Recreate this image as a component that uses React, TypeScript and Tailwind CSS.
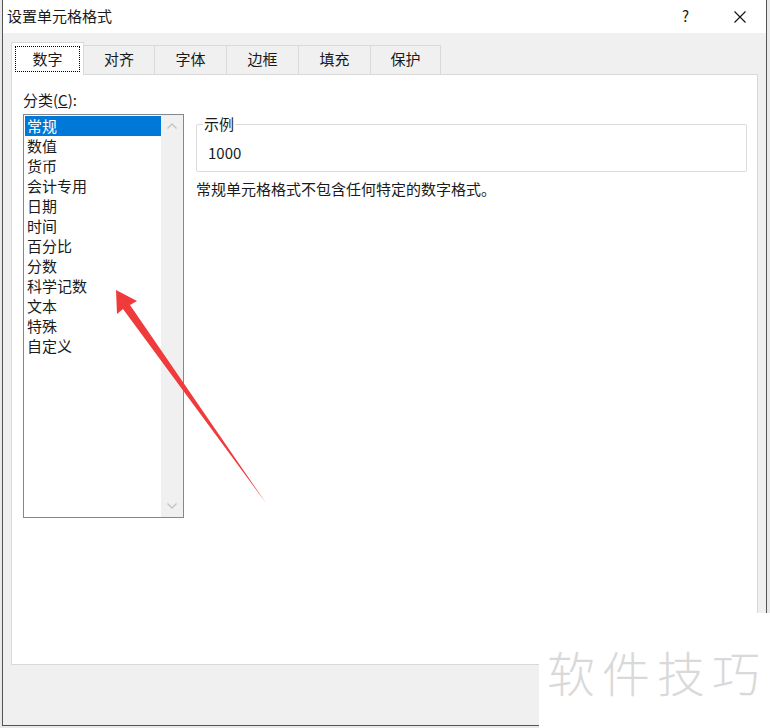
import React from "react";

const tabs = [
  { t: "对齐", w: "w-[71px]" },
  { t: "字体", w: "w-[72px]" },
  { t: "边框", w: "w-[72px]" },
  { t: "填充", w: "w-[72px]" },
  { t: "保护", w: "w-[70px]" },
];
const categories = ["常规", "数值", "货币", "会计专用", "日期", "时间", "百分比", "分数", "科学记数", "文本", "特殊", "自定义"];

export default function App() {
  return (
    <div
      className="relative w-[770px] h-[728px] overflow-hidden bg-[#e9e9e9] text-[#1a1a1a]"
      style={{ fontFamily: '"Noto Sans CJK SC", "Noto Sans", sans-serif' }}
    >
      <div className="ml-[2px] w-[765px] h-[726px] border-l border-r border-b border-[#555] bg-[#f0f0f0] flex flex-col">
        {/* title bar */}
        <div className="h-[33px] bg-white flex items-center pl-[4px] text-[15px]">
          <span>设置单元格格式</span>
          <span className="ml-auto mr-[45px] text-[15px]">?</span>
          <svg width="12" height="12" viewBox="0 0 12 12" className="mr-[20px]">
            <path d="M0.5 0.5 L11.5 11.5 M11.5 0.5 L0.5 11.5" stroke="#111" strokeWidth="1.1" />
          </svg>
        </div>

        <div className="pt-[9px] pl-[8px] pr-[8px]">
          {/* tabs */}
          <div className="flex items-end h-[32px] relative z-10">
            <div className="w-[73px] h-[33px] -mb-px bg-white border border-b-0 border-[#d9d9d9] p-[3px]">
              <div className="h-full border border-dotted border-black flex items-center justify-center text-[15px]">
                数字
              </div>
            </div>
            {tabs.map((x) => (
              <div
                key={x.t}
                className={
                  x.w +
                  " h-[29px] border-t border-r border-[#d9d9d9] bg-[#f0f0f0] flex items-center justify-center text-[15px] pb-[1px]"
                }
              >
                {x.t}
              </div>
            ))}
          </div>

          {/* panel */}
          <div className="h-[591px] bg-white border border-[#d9d9d9] flex pl-[11px] pr-[10px]">
            <div className="flex flex-col pt-[15px]">
              <div className="text-[15px] leading-[20px] h-[24px]">
                分类(<span className="underline">C</span>):
              </div>
              <div className="w-[161px] h-[404px] border border-[#828790] bg-white flex">
                <div className="flex-1 pt-px pl-px">
                  {categories.map((c, i) => (
                    <div
                      key={c}
                      className={
                        "h-[20px] leading-[20px] pl-[2px] text-[15px] " +
                        (i === 0 ? "bg-[#0078d7] text-white" : "")
                      }
                    >
                      {c}
                    </div>
                  ))}
                </div>
                <div className="w-[22px] bg-[#f0f0f0] flex flex-col items-center justify-between py-[8px]">
                  <svg width="10" height="6" viewBox="0 0 10 6">
                    <path d="M0.5 5.5 L5 1 L9.5 5.5" fill="none" stroke="#c2c2c2" strokeWidth="1.3" />
                  </svg>
                  <svg width="10" height="6" viewBox="0 0 10 6">
                    <path d="M0.5 0.5 L5 5 L9.5 0.5" fill="none" stroke="#c2c2c2" strokeWidth="1.3" />
                  </svg>
                </div>
              </div>
            </div>

            <div className="flex-1 pl-[12px] pt-[49px]">
              <div className="relative h-[48px] border border-[#dcdcdc] rounded-[2px]">
                <span className="absolute left-[6px] -top-[11px] bg-white px-px text-[15px] leading-[20px]">
                  示例
                </span>
                <div className="pl-[11px] pt-[18px] text-[15px] leading-[20px]">1000</div>
              </div>
              <div className="mt-[7px] text-[15px] leading-[20px]">常规单元格格式不包含任何特定的数字格式。</div>
            </div>
          </div>
        </div>
      </div>

      {/* watermark */}
      <div className="absolute left-[539px] top-[613px] right-0 bottom-0 bg-white flex items-center pl-[8px]">
        <span className="text-[48px] tracking-[7px] font-light text-[#d9d9d9] leading-none">软件技巧</span>
      </div>

      {/* red arrow annotation */}
      <svg className="absolute left-0 top-0 pointer-events-none" width="770" height="728">
        <polygon points="116,290 137,301 130,305 266,503 123,309 117,314" fill="#ef3b3b" />
      </svg>
    </div>
  );
}
